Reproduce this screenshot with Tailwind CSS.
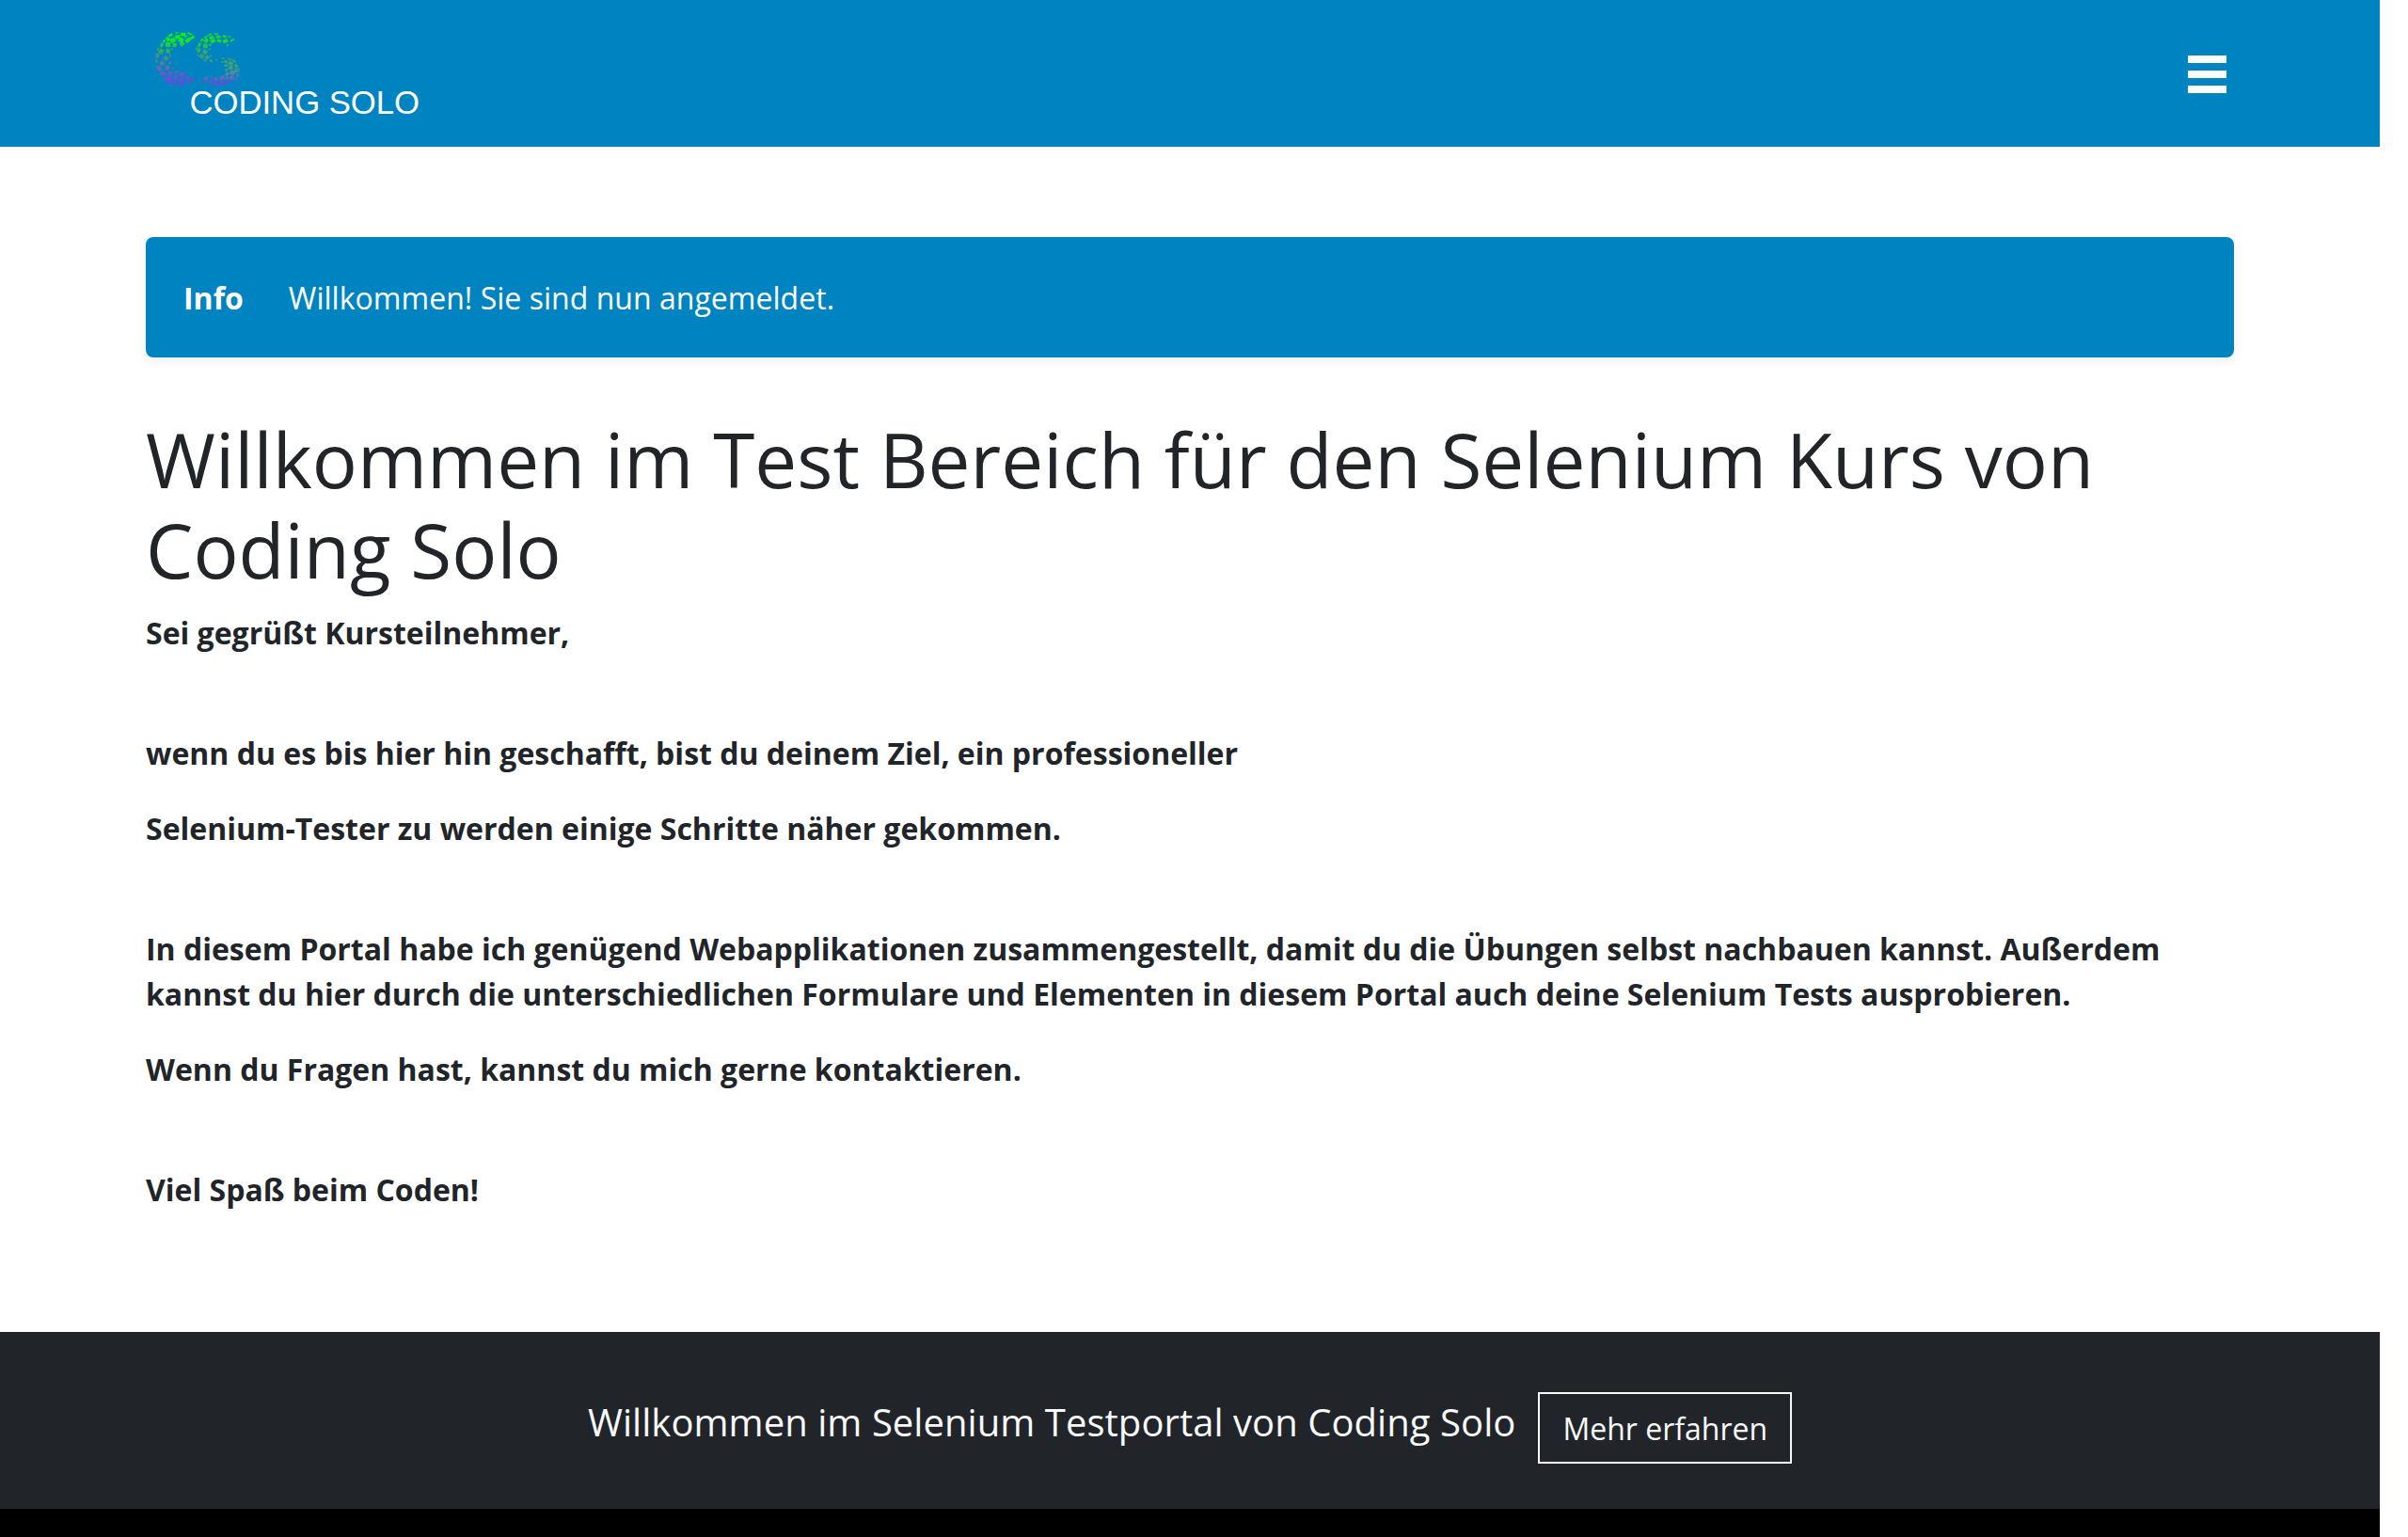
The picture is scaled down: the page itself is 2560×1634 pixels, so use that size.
<!DOCTYPE html>
<html lang="de">
<head>
<meta charset="utf-8">
<title>Coding Solo Testportal</title>
<script src="https://cdn.jsdelivr.net/npm/@tailwindcss/browser@4"></script>
</head>
<body class="bg-white">
<div class="w-[2530px] h-[1634px] overflow-hidden flex flex-col font-['Open_Sans',sans-serif] text-[32px] leading-[48px] text-[#212529]">
  <header class="h-[156px] shrink-0 bg-[#0083c1] flex items-start justify-between pl-[155px] pr-[163.5px]">
    <svg class="mt-5 w-[310px] h-[110px]" viewBox="5 0 310 110" role="img" aria-label="Coding Solo">
      <defs>
        <linearGradient id="gc" gradientUnits="userSpaceOnUse" x1="0" y1="42" x2="0" y2="212">
          <stop offset="0" stop-color="#00f800"/><stop offset=".15" stop-color="#0cf016"/><stop offset=".3" stop-color="#2fb455"/>
          <stop offset=".5" stop-color="#4d8b8b"/><stop offset=".68" stop-color="#6569ad"/><stop offset=".88" stop-color="#7549dc"/><stop offset="1" stop-color="#7a3df0"/>
        </linearGradient>
        <linearGradient id="gs" gradientUnits="userSpaceOnUse" x1="0" y1="46" x2="0" y2="212">
          <stop offset="0" stop-color="#20c845"/><stop offset=".15" stop-color="#16dc2c"/><stop offset=".4" stop-color="#3a9c78"/>
          <stop offset=".6" stop-color="#41a56b"/><stop offset=".78" stop-color="#548aa0"/><stop offset=".9" stop-color="#6c58c8"/><stop offset="1" stop-color="#733fee"/>
        </linearGradient>
      </defs>
      <g transform="scale(.3333)">
        <path id="tiles-c" fill="url(#gc)" d=""/>
        <path id="tiles-s" fill="url(#gs)" d=""/>
      </g>
      <text x="51.5" y="100.5" textLength="244.5" fill="#fff" class="font-['Liberation_Sans',sans-serif] text-[34.7px]">CODING SOLO</text>
    </svg>
    <button class="mt-[59px] flex flex-col gap-2" aria-label="Menü">
      <span class="block w-[40.5px] h-2 bg-white"></span>
      <span class="block w-[40.5px] h-2 bg-white"></span>
      <span class="block w-[40.5px] h-2 bg-white"></span>
    </button>
  </header>

  <main class="h-[1260px] shrink-0 px-[155px] pt-24">
    <div class="flex gap-12 rounded-[8px] bg-[#0083c1] px-10 pt-[41px] pb-[39px] text-white shadow-[0_4px_12px_0_rgba(0,0,0,0.07)]">
      <strong class="font-bold">Info</strong>
      <span class="tracking-[0.03px]">Willkommen! Sie sind nun angemeldet.</span>
    </div>
    <h1 class="mt-[60px] mb-[17px] text-[80px] leading-[96px] font-normal tracking-[0.05px]">Willkommen im Test Bereich für den Selenium Kurs von Coding Solo</h1>
    <div class="flex flex-col gap-8 font-bold">
      <p class="pb-12">Sei gegrüßt Kursteilnehmer,</p>
      <p>wenn du es bis hier hin geschafft, bist du deinem Ziel, ein professioneller</p>
      <p class="pb-12">Selenium-Tester zu werden einige Schritte näher gekommen.</p>
      <p>In diesem Portal habe ich genügend Webapplikationen zusammengestellt, damit du die Übungen selbst nachbauen kannst. Außerdem kannst du hier durch die unterschiedlichen Formulare und Elementen in diesem Portal auch deine Selenium Tests ausprobieren.</p>
      <p class="pb-12">Wenn du Fragen hast, kannst du mich gerne kontaktieren.</p>
      <p>Viel Spaß beim Coden!</p>
    </div>
  </main>

  <section class="h-[188px] shrink-0 bg-[#212529] text-[#f8f9fa] flex items-start justify-center gap-6 pt-16">
    <span class="mt-0.5 text-[40px] leading-[60px] tracking-[0.05px]">Willkommen im Selenium Testportal von Coding Solo</span>
    <a class="border-2 border-[#f8f9fa] px-6 pt-[13px] pb-[11px]">Mehr erfahren</a>
  </section>
  <footer class="grow bg-black"></footer>
</div>
<script>
// Mosaic tiles: centre x, centre y, half width, half height, rotation in degrees
const C = [
 [114,45,5,2,-15],[134,50,9,5,5],[156,48,8,2.5,20],[94,52,7,3.5,-30],[116,58,8,5.5,-12],[82,60,4,2,-40],
 [101,69,8,7,-30],[142,56,4,2.5,10],[127,68,7,7,40],[149,69,8,6,-35],[163,60,8,4,-30],[131,80,7,6,-35],[87,66,6,5,-35],[73,71,5,3,-50],
 [86,82,8,8,5],[107,84,6,6,10],[66,84,7,4,-65],[64,104,8,7,-60],[86,103,7,7,12],[54,97,5,2.5,-65],[99,97,3,2,-30],
 [53,118,7,4,-75],[79,126,7,7,40],[93,118,4,3,-60],[47,113,4,1.5,-80],[67,142,7,7,30],[49,134,7,3,80],[92,141,4,4,40],
 [59,160,8,6,55],[84,156,7,7,25],[52,152,4,2,70],[101,158,4,3,30],[71,174,7,6,50],[92,175,7,8,15],[112,171,5,4,25],[61,177,5,2,60],
 [89,193,8,7,15],[111,188,7,7,40],[130,178,7,6,30],[76,190,6,4,45],[107,204,7,4,20],[129,196,7,7,30],[148,189,7,6,35],
 [93,206,6,2.5,25],[119,211,6,2,8],[132,208,6,3,0],[150,203,6,3,-15],[165,194,6,3.5,-10],[120,167,3,2,30],[141,171,3,2,30]
];
const S = [
 [240,48,7,2,0],[219,51,6,3,-20],[246,57,8,4,8],[266,56,6,4,12],[225,60,7,5,-25],[206,58,6,3,-35],[282,57,5,2,10],
 [229,71,8,6,-25],[249,70,7,5,20],[269,71,8,6,-25],[291,68,7,3,-30],[208,70,7,6,-40],[194,68,6,3,-45],[276,84,4,2,-30],
 [205,87,7,7,0],[186,83,7,4,-65],[220,83,4,3,-30],[184,101,7,5,-80],[204,106,7,7,30],[177,95,5,2,-80],[219,97,3,2,-40],
 [193,119,7,6,35],[211,123,6,6,45],[181,116,4,2,60],[222,118,3,2.5,20],[204,132,5,3,40],[223,134,4,3.5,40],[241,131,2.5,2,10],
 [262,126,5,2,10],[283,129,6,3,20],[270,137,6,4,25],[297,135,6,3,35],[286,142,7,6,30],[303,150,6,5,50],[259,137,3,2,20],[271,149,5,4,25],
 [286,156,7,6,5],[303,165,5,7,0],[312,163,2,7,0],[273,163,4,4,20],[291,172,8,7,15],[308,180,3,6,20],[274,177,5,6,10],[289,189,7,7,35],
 [302,193,4,4,-40],[274,190,5,6,35],[258,189,8,6,-25],[277,203,6,4,-35],[238,193,7,6,35],[256,203,7,5,-10],[221,201,6,4,30],[240,207,8,4,5],
 [207,191,8,5,10],[205,202,4,2,25],[190,198,5,2,20],[225,210,6,2,8],[262,209,6,2,-10],[225,188,3,2,20]
];
function tiles(list) {
  return list.map(([x, y, w, h, a]) => {
    const c = Math.cos(a * Math.PI / 180), s = Math.sin(a * Math.PI / 180);
    return 'M' + [[-w, -h], [w, -h], [w, h], [-w, h]]
      .map(([p, q]) => (x + p * c - q * s).toFixed(1) + ' ' + (y + p * s + q * c).toFixed(1)).join('L') + 'Z';
  }).join('');
}
document.getElementById('tiles-c').setAttribute('d', tiles(C));
document.getElementById('tiles-s').setAttribute('d', tiles(S));
</script>
</body>
</html>
